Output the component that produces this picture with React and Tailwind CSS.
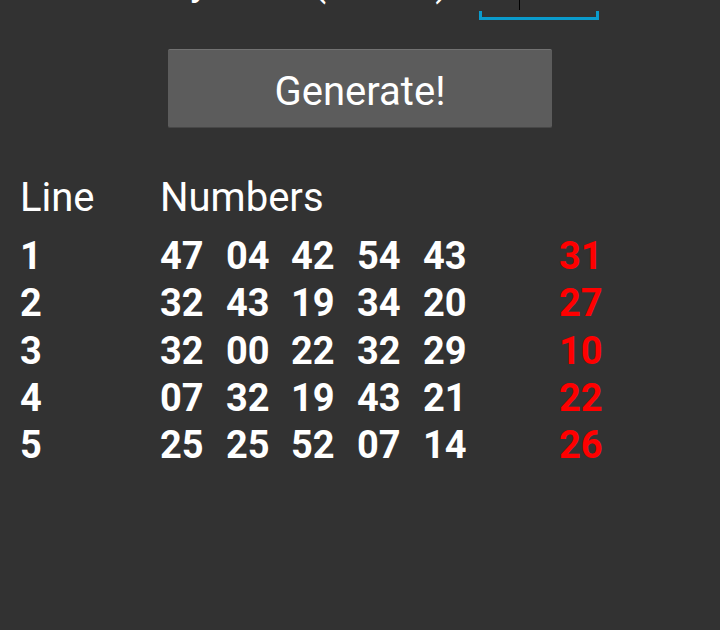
import React from 'react';

const lines = [
  { id: 1, nums: ['47', '04', '42', '54', '43'], ball: '31' },
  { id: 2, nums: ['32', '43', '19', '34', '20'], ball: '27' },
  { id: 3, nums: ['32', '00', '22', '32', '29'], ball: '10' },
  { id: 4, nums: ['07', '32', '19', '43', '21'], ball: '22' },
  { id: 5, nums: ['25', '25', '52', '07', '14'], ball: '26' },
];

const App = () => {
  return (
    <div className="w-[720px] h-[630px] overflow-hidden bg-[#323232] text-white font-['Roboto',sans-serif]">
      {/* line count input, scrolled partly out of view */}
      <div className="mt-[-42px] flex pl-[20px]">
        <span className="w-[459px] shrink-0 text-[40px] leading-[47px] whitespace-nowrap">How many lines (max 5)</span>
        <div className="w-[120px] h-[62px] flex flex-col">
          <div className="flex-1 flex items-start pl-[16px]">
            <span className="text-[40px] leading-[47px]">5</span>
            <div className="w-px h-[52px] bg-black ml-[2px]" />
          </div>
          <div className="h-[9px] border-x-[3px] border-b-[3px] border-[#0a9bcc]" />
        </div>
      </div>

      <button className="mt-[29px] mx-auto w-[384px] h-[79px] flex items-center justify-center pt-[6px] bg-[#5c5c5c] border-t border-t-[#727272] border-b border-b-[#474747] rounded-[2px] text-[40px] leading-[46px] text-white">
        Generate!
      </button>

      <div className="mt-[46px] pl-[20px]">
        <div className="grid grid-cols-[140px_auto] text-[40px] leading-[47px]">
          <span>Line</span>
          <span>Numbers</span>
        </div>
        <div className="mt-[12px]">
          {lines.map((l) => (
            <div key={l.id} className="grid grid-cols-[140px_66px_65px_66px_66px_136px_auto] text-[38px] leading-[47.3px] font-bold">
              <span>{l.id}</span>
              {l.nums.map((n, i) => (
                <span key={i}>{n}</span>
              ))}
              <span className="text-[#ff0000]">{l.ball}</span>
            </div>
          ))}
        </div>
      </div>
    </div>
  );
};

export default App;
